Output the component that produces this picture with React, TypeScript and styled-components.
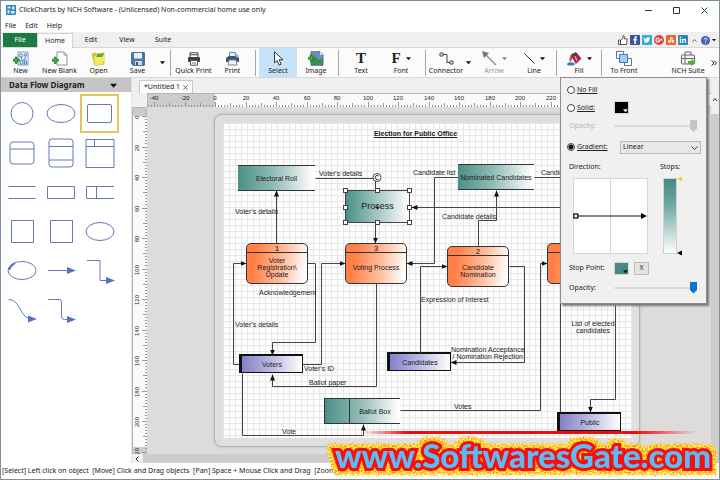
import React from "react";
import styled, { createGlobalStyle, css } from "styled-components";

const UI = '"Noto Sans", "Open Sans", sans-serif';
const ARIAL = '"Liberation Sans", Arial, sans-serif';

const Global = createGlobalStyle`
  *, *::before, *::after { box-sizing: border-box; }
  html, body { margin: 0; }
  body { font-family: ${UI}; font-size: 7px; line-height: 10px; color: #222; background: #fff; overflow: hidden; }
  button, input, select { font: inherit; color: inherit; margin: 0; }
  svg { display: block; flex: none; }
`;

/* ---------- window frame ---------- */

const Window = styled.div`
  position: relative;
  display: flex;
  flex-direction: column;
  height: 100vh;
  border: 1px solid #7a909c;
  background: #fff;
`;

const TitleBar = styled.header`
  display: flex;
  align-items: center;
  height: 18px;
  padding: 0 11px 0 5px;
  gap: 3px;
`;

const Title = styled.h1`
  flex: 1;
  margin: 0;
  font-size: 7px;
  font-weight: 400;
  white-space: nowrap;
`;

const WindowButtons = styled.div`
  display: flex;
  gap: 21px;
`;

const BareButton = styled.button`
  display: flex;
  align-items: center;
  justify-content: center;
  padding: 0;
  border: 0;
  background: none;
`;

const MenuBar = styled.nav`
  display: flex;
  height: 13px;
  padding-left: 4px;
  gap: 9px;
`;

const TabStrip = styled.div`
  display: flex;
  align-items: stretch;
  height: 16px;
  padding: 1px 3px 0 2px;
  background: #efefef;
  border-bottom: 1px solid #d8d8d8;
`;

const RibbonTab = styled.button<{ $kind?: "file" | "active" }>`
  width: 36px;
  padding: 0;
  border: 0;
  background: none;
  ${(p) => p.$kind === "file" && css`background: #1e7a45; color: #fff; width: 34px;`}
  ${(p) => p.$kind === "active" && css`background: #fbfbfb; border: 1px solid #d4d4d4; border-bottom: 0; margin-bottom: -1px;`}
`;

const Social = styled.div`
  display: flex;
  align-items: center;
  gap: 2px;
  margin-left: auto;
`;

/* ---------- toolbar ---------- */

const Toolbar = styled.div`
  display: flex;
  align-items: stretch;
  height: 30px;
  background: #fbfbfb;
  border-bottom: 1px solid #d9d9d9;
`;

const Tool = styled.button<{ $width?: number; $on?: boolean; $dim?: boolean }>`
  display: flex;
  flex-direction: column;
  align-items: center;
  flex: none;
  width: ${(p) => p.$width ?? 39}px;
  padding: 3px 0 0;
  border: 0;
  background: ${(p) => (p.$on ? "#c6e2f8" : "none")};
  color: ${(p) => (p.$dim ? "#999" : "#222")};
  white-space: nowrap;
  line-height: 10px;
`;

const ToolIcon = styled.span`
  display: flex;
  align-items: center;
  gap: 5px;
  height: 15px;
`;

const Separator = styled.span`
  flex: none;
  width: 1px;
  margin: 2px 3px 1px;
  background: #a6a6a6;
`;

const Split = styled(BareButton)`
  flex: none;
  width: 10px;
`;

const Anchor = styled.div`
  position: relative;
  display: flex;
`;

const Spacer = styled.span`
  flex: 1;
`;

/* ---------- main area ---------- */

const Main = styled.main`
  display: grid;
  grid-template-columns: 131px minmax(0, 1fr);
  flex: 1;
  min-height: 0;
`;

const Sidebar = styled.aside`
  border-right: 1px solid #e2e2e2;
  background: #fff;
`;

const SidebarTitle = styled.button`
  display: flex;
  align-items: center;
  justify-content: space-between;
  width: 100%;
  height: 14px;
  padding: 0 14px 0 8px;
  border: 0;
  background: #c5c5c5;
  font-size: 8px;
  font-weight: 700;
`;

const Palette = styled.div`
  display: grid;
  grid-template-columns: repeat(3, 39px);
  grid-auto-rows: 39px;
  padding: 2px 1px;
`;

const Shape = styled.button<{ $on?: boolean }>`
  padding: 0;
  border: 2px solid ${(p) => (p.$on ? "#e3c55c" : "transparent")};
  background: none;
`;

const Editor = styled.section`
  display: flex;
  flex-direction: column;
  min-width: 0;
  background: #efefef;
`;

const DocTabs = styled.div`
  display: flex;
  align-items: flex-end;
  height: 15px;
  padding-left: 7px;
`;

const DocTab = styled.div`
  display: flex;
  align-items: center;
  gap: 3px;
  height: 13px;
  padding: 0 4px;
  border: 1px solid #c8c8c8;
  border-bottom: 0;
  background: #fcfcfc;
`;

const Workspace = styled.div`
  display: grid;
  grid-template-columns: 15px minmax(0, 1fr) 8px;
  grid-template-rows: 14px minmax(0, 1fr) 9px;
  flex: 1;
  min-height: 0;
`;

const Corner = styled.span`
  background: #f0f0f0;
`;

const RulerBox = styled.div`
  overflow: hidden;
  background: #fafafa;
  border: solid #b4b4b4;
  border-width: 1px 0 0 1px;
`;

const Canvas = styled.div`
  overflow: hidden;
  padding: 7px 0 0 67px;
  background: #dcdcdc;
`;

const PageFrame = styled.div`
  width: 426px;
  padding: 8px 7px 8px 8px;
  border: 1px solid #b2b2b2;
  border-radius: 8px;
  background: #dfdfdf;
  box-shadow: 0 0 2px 1px #c9c9c9;
`;

const Page = styled.div`
  position: relative;
  height: 315px;
  background-color: #fefefe;
  background-image: linear-gradient(#e6e6e6 1px, transparent 1px),
    linear-gradient(90deg, #e6e6e6 1px, transparent 1px);
  background-size: 6px 6px;
  font-family: ${ARIAL};
  line-height: 7px;
  color: #1a1a1a;
`;

const VScroll = styled.div`
  grid-row: 1 / 3;
  grid-column: 3;
  display: flex;
  flex-direction: column;
  align-items: stretch;
  gap: 6px;
  padding-top: 4px;
  background: #f0f0f0;
`;

const HScroll = styled.div`
  grid-column: 1 / 4;
  display: flex;
  align-items: stretch;
  gap: 4px;
  padding-left: 3px;
  background: #f0f0f0;
`;

const Thumb = styled.span`
  flex: 1;
  background: #cdcdcd;
`;

const StatusBar = styled.footer`
  display: flex;
  align-items: center;
  gap: 10px;
  height: 16px;
  padding-left: 1px;
  background: #fff;
  white-space: pre;
`;

/* ---------- diagram nodes ---------- */

const PAGE_X = 223;
const PAGE_Y = 123;

type Box = { $x: number; $y: number; $w?: number; $h?: number };

const placed = css<Box>`
  position: absolute;
  left: ${(p) => p.$x - PAGE_X}px;
  top: ${(p) => p.$y - PAGE_Y}px;
  ${(p) => p.$w && `width: ${p.$w}px;`}
  ${(p) => p.$h && `height: ${p.$h}px;`}
`;

const Store = styled.div<Box & { $split?: boolean }>`
  ${placed}
  display: flex;
  align-items: center;
  justify-content: center;
  border: solid #333;
  border-width: 1px 0;
  background: linear-gradient(90deg, #4b9086, #8fbab4 45%, #fff 98%);
  ${(p) => p.$split && css`
    padding-left: 25px;
    border-left-width: 1px;
    &::before { content: ""; position: absolute; left: 24px; top: 0; bottom: 0; width: 1px; background: #333; }
  `}
`;

const ProcessBox = styled.div<Box>`
  ${placed}
  display: flex;
  align-items: center;
  justify-content: center;
  border: 1px solid #444;
  background: linear-gradient(90deg, #4b9086, #fff);
  font-size: 9px;
`;

const Step = styled.div<Box>`
  ${placed}
  border: 1px solid #333;
  border-radius: 5px;
  background: linear-gradient(100deg, #ff7f45 15%, #ffc0a2 60%, #fff 95%);
  text-align: center;
`;

const StepNumber = styled.div`
  height: 9px;
  border-bottom: 1px solid #333;
  font-size: 8px;
  line-height: 9px;
`;

const StepName = styled.div`
  display: flex;
  align-items: center;
  justify-content: center;
  height: 29px;
  white-space: pre-line;
`;

const Actor = styled.div<Box>`
  ${placed}
  display: flex;
  align-items: center;
  justify-content: center;
  border: solid #111;
  border-width: 2px 1px 1px 3px;
  background: linear-gradient(90deg, #8480c9, #c9c7e8 60%, #fff);
`;

const FlowLabel = styled.div<Box & { $align?: string }>`
  ${placed}
  text-align: ${(p) => p.$align ?? "left"};
  white-space: pre;
`;

const PageTitle = styled.h2`
  margin: 0;
  padding: 6px 24px 0 0;
  font-size: 7px;
  line-height: 9px;
  text-align: center;
  text-decoration: underline;
`;

const Links = styled.svg`
  position: absolute;
  inset: 0;
  overflow: visible;
`;

/* ---------- fill panel ---------- */

const Panel = styled.form`
  position: absolute;
  z-index: 5;
  top: 100%;
  left: 0;
  width: 147px;
  padding: 3px 5px 8px 6px;
  border: 1px solid #8d8d8d;
  background: #f0f0f0;
  box-shadow: 2px 2px 2px #777;
`;

const Field = styled.div<{ $height?: number }>`
  display: grid;
  grid-template-columns: 47px minmax(0, 1fr);
  align-items: center;
  height: ${(p) => p.$height ?? 18}px;
`;

const Choice = styled.label`
  display: flex;
  align-items: center;
  gap: 2px;
  text-decoration: underline;
`;

const Radio = styled.input`
  appearance: none;
  flex: none;
  width: 8px;
  height: 8px;
  border: 1px solid #444;
  border-radius: 50%;
  background: #fff;
  &:checked { background: radial-gradient(#111 2px, #fff 3px); }
`;

const Caption = styled.label<{ $dim?: boolean }>`
  padding-left: 2px;
  color: ${(p) => (p.$dim ? "#b5b5b5" : "#222")};
  white-space: nowrap;
`;

const Swatch = styled.button<{ $color: string }>`
  display: flex;
  align-items: flex-end;
  justify-content: flex-end;
  width: 15px;
  height: 13px;
  padding: 0;
  border: 1px solid #d5d5d5;
  background: ${(p) => p.$color};
`;

const Slider = styled.input<{ $color: string }>`
  appearance: none;
  width: 83px;
  height: 12px;
  background: linear-gradient(#dcdcdc, #dcdcdc) center / 100% 2px no-repeat;
  &::-webkit-slider-thumb {
    appearance: none;
    width: 7px;
    height: 12px;
    background: ${(p) => p.$color};
    clip-path: polygon(0 0, 100% 0, 100% 70%, 50% 100%, 0 70%);
  }
`;

const SelectWrap = styled.span`
  position: relative;
  display: flex;
  margin-left: 6px;
  svg { position: absolute; right: 3px; top: 5px; }
`;

const Select = styled.select`
  appearance: none;
  width: 100%;
  height: 13px;
  padding: 0 2px;
  border: 1px solid #b8b8b8;
  border-radius: 0;
  background: #e8e8e8;
  line-height: 10px;
`;

const GradientArea = styled.div`
  display: flex;
  gap: 15px;
  padding: 3px 0 0 6px;
`;

const StopControls = styled.div`
  display: flex;
  align-items: center;
  gap: 5px;
`;

const RemoveStop = styled(BareButton)`
  width: 15px;
  height: 13px;
  border: 1px solid #bbb;
  background: #e4e4e4;
`;

const StopHeads = styled(Field)`
  grid-template-columns: 91px minmax(0, 1fr);
`;

/* ---------- banner ---------- */

const Banner = styled.div`
  position: absolute;
  z-index: 6;
  right: 8px;
  bottom: 3px;
  font-family: Lato, ${ARIAL};
  font-size: 33px;
  font-weight: 900;
  line-height: 42px;
  color: #5bbdf5;
  -webkit-text-stroke: 6px #fb0d0d;
  paint-order: stroke fill;
  filter: url(#banner-glow);
  white-space: nowrap;
`;

const RedRule = styled.div`
  position: absolute;
  z-index: 6;
  left: 50%;
  right: 22px;
  bottom: 45px;
  height: 3px;
  background: linear-gradient(90deg, transparent, #f50a0a 14%, #f50a0a 82%, transparent);
`;

/* ---------- icons ---------- */

const Caret = ({ size = 5, color = "#111" }: { size?: number; color?: string }) => (
  <svg width={size} height={size} viewBox="0 0 6 6"><path d="M0 1.5h6L3 5z" fill={color} /></svg>
);

const Cross = ({ size }: { size: number }) => (
  <svg width={size} height={size} viewBox="0 0 7 7" stroke="#333" fill="none"><path d="M.5.5l6 6M6.5.5l-6 6" /></svg>
);

const Plus = ({ x = 0, y = 0 }: { x?: number; y?: number }) => (
  <path transform={`translate(${x} ${y})`} d="M2.2 0h2v2.2h2.3v2H4.200v2.300h-2V4.200H0v-2h2.200z" fill="#3bb02e" stroke="#137016" strokeWidth=".6" />
);

const icons: Record<string, React.ReactNode> = {
  New: (
    <svg width="16" height="15" viewBox="0 0 16 15">
      <path d="M5 1h10v13H5z" fill="#eaf3fc" stroke="#7e9fc4" />
      <circle cx="8" cy="4.500" r="1.600" fill="none" stroke="#3f7fb8" /><circle cx="12.500" cy="4" r="1.300" fill="none" stroke="#3f7fb8" />
      <path d="M8 6l1 3h3V6M7 10h3v3H7zM11.500 10h2v3h-2z" fill="none" stroke="#3f7fb8" strokeWidth=".9" /><Plus y={6} />
    </svg>
  ),
  "New Blank": (
    <svg width="16" height="15" viewBox="0 0 16 15"><path d="M5 1h7l3 3v10H5z" fill="#fff" stroke="#8c96a3" /><path d="M12 1v3h3" fill="none" stroke="#8c96a3" /><Plus y={6} /></svg>
  ),
  Open: (
    <svg width="15" height="15" viewBox="0 0 15 15"><path d="M1 3l4-1 1 1 7-1v11l-9 1.500z" fill="#d9c52c" stroke="#b5a21d" strokeWidth=".6" /><path d="M3 5l11-1-2 9-8 1.500z" fill="#f5e861" /><path d="M5 6l3-4 1 2 4-2-2 4z" fill="#48a836" /></svg>
  ),
  Save: (
    <svg width="14" height="14" viewBox="0 0 14 14"><path d="M.7.7h12.600v12.600H2L.7 12z" fill="#4f7aa8" stroke="#335c8c" /><path d="M3 1h8v5.500H3z" fill="#e9eff6" /><path d="M4 9h7v4H4z" fill="#d3dbe3" /><path d="M5 10h2v3H5z" fill="#456" /></svg>
  ),
  "Quick Print": (
    <svg width="14" height="14" viewBox="0 0 14 14"><path d="M3 5V.8h8V5M3 2.800h8" fill="#fff" stroke="#444" /><rect x="1" y="5" width="12" height="5" rx="1" fill="#3f3f3f" /><path d="M3.500 8.500h7v4.700h-7z" fill="#fff" stroke="#555" /><path d="M5 11h4" stroke="#777" /></svg>
  ),
  Print: (
    <svg width="15" height="15" viewBox="0 0 15 15"><path d="M4 6l1-5 6 1-1 4" fill="#e6f0fb" stroke="#5b83b3" /><path d="M1 7l3-2h8l2 2v4H1z" fill="#4a5058" /><path d="M4 9h7l1 5H3z" fill="#eef4fb" stroke="#6c87a8" /><circle cx="12" cy="5" r="1.500" fill="#77aee2" /></svg>
  ),
  Select: (
    <svg width="11" height="15" viewBox="0 0 11 15"><path d="M1.500.8v11l2.600-2.300 2 4.600 2-.9-2-4.400H10z" fill="#fff" stroke="#222" strokeWidth=".9" /></svg>
  ),
  Image: (
    <svg width="16" height="15" viewBox="0 0 16 15"><path d="M3 .700h9l3 3v10.600H3z" fill="#6a8fc0" stroke="#5a6f92" /><path d="M3.500 9l4-3 3 3 4-2v7h-11z" fill="#3f8d4d" /><path d="M12 .700v3h3" fill="#e8eef6" /><Plus y={4} /></svg>
  ),
  Connector: (
    <svg width="15" height="13" viewBox="0 0 15 13" fill="none" stroke="#444"><path d="M1 1h3v3H1zM11 9h3v3h-3zM4 2.500h4v8h3" /></svg>
  ),
  Arrow: (
    <svg width="15" height="15" viewBox="0 0 15 15"><path d="M3 3l11 11" stroke="#888" strokeWidth="1.200" /><path d="M0 0l7 2-5 5z" fill="#777" /></svg>
  ),
  Line: <svg width="11" height="11" viewBox="0 0 11 11"><path d="M.5.5l10 10" stroke="#333" /></svg>,
  Fill: (
    <svg width="15" height="14" viewBox="0 0 15 14"><path d="M4 3l5-2.500 5 6-5 5z" fill="#b51d42" stroke="#5d1630" strokeWidth=".6" /><path d="M4 3l5-2.500 1.500 2L5.500 6z" fill="#444" /><path d="M8 4l2 5" stroke="#f090a8" strokeWidth="1.500" /><path d="M4 3c-2 3-2 5-1 7l3-4z" fill="#e04060" /><path d="M0 12c1-2 4-2 7-1 2 1 0 2.500-3 2.500S0 13 0 12z" fill="#3979c2" /></svg>
  ),
  "To Front": (
    <svg width="16" height="15" viewBox="0 0 16 15" stroke="#54759c"><path d="M.5.5h7v7h-7zM8.500 7.500h7v7h-7z" fill="#fff" /><path d="M3.500 3.500h8v8h-8z" fill="#a9cdf7" stroke="#4476bd" /></svg>
  ),
  "NCH Suite": (
    <svg width="16" height="15" viewBox="0 0 16 15"><path d="M5 4V1h6v3" fill="none" stroke="#667" /><rect x="1.500" y="4" width="13" height="9" rx="1" fill="#f5f7f5" stroke="#667" /><path d="M1.500 7.500h13M5 4v9" stroke="#667" /><path d="M8 10h3V8l4.500 3.500L11 15v-2H8z" fill="#4dae33" /></svg>
  ),
};

const Glyph = styled.span`
  font-family: "Liberation Serif", serif;
  font-size: 15px;
  font-weight: 700;
  line-height: 15px;
`;

type ToolProps = { name: string; width?: number; caret?: boolean; on?: boolean; dim?: boolean; glyph?: string };

const ToolButton = ({ name, width, caret, on, dim, glyph }: ToolProps) => (
  <Tool type="button" $width={width} $on={on} $dim={dim} aria-pressed={on}>
    <ToolIcon>
      {glyph ? <Glyph aria-hidden>{glyph}</Glyph> : icons[name]}
      {caret && <Caret color={dim ? "#888" : "#111"} />}
    </ToolIcon>
    {name}
  </Tool>
);

const AppIcon = () => (
  <svg width="10" height="10" viewBox="0 0 10 10"><rect width="10" height="10" rx="1" fill="#2f87b5" /><path d="M1.500 1.500h3v2h-3zM6 1.500h2.500v3H6zM1.500 5h2v3.500h-2zM5 6h3.500v2.500H5z" fill="#d9f0fb" /></svg>
);

const badges = [
  { name: "Facebook", color: "#3a5795", d: "M5.800 9V5.500H7V4H5.800V3.200c0-.5.300-.7 1.200-.6V1.200C5 1 4.300 1.700 4.300 3v1h-1v1.500h1V9z" },
  { name: "Twitter", color: "#35a8e0", d: "M1.500 7.200c2.500 1.500 6 .3 6-3.700l.9-1-1.200.2C6.500 1.500 4.500 2 4.800 3.700 3.400 3.700 2.500 3 1.900 2.200c-.6 1 0 2 .5 2.400l-.7-.2c0 1 .7 1.500 1.400 1.700l-.6.100c.3.600.8.800 1.300.8-.7.300-1.500.400-2.300.2z" },
  { name: "Google Plus", color: "#d84a3c", round: true, d: "M4 4.400h2.400C6.700 6.500 5.500 7.500 4 7.500a2.500 2.500 0 110-5c.7 0 1.200.2 1.700.6l-.8.8C3.800 3 2.500 3.800 2.500 5c0 1.600 2.200 1.900 2.700.5H4zM7 3.500h.7v.8h.8V5h-.8v.8H7V5h-.6v-.7H7z" },
  { name: "StumbleUpon", color: "#eb6a24", d: "M2 5h1.500v1.500h.7V3.800c0-2 2.600-2 2.600 0v.6H5.600v-.8h-.5v3c0 1.800-3 1.800-3 0zM5.700 5H8v1.500c0 1.800-2.400 1.800-2.400 0z" },
  { name: "LinkedIn", color: "#2f83b7", d: "M1.800 3.800h1.300V8H1.800zM1.800 1.800h1.300v1.300H1.800zM4 3.800h1.200v.6c.8-1.200 3-1 3 1V8H6.900V5.700c0-1-1.500-1-1.500 0V8H4z" },
];

const BadgeIcon = ({ badge }: { badge: (typeof badges)[number] }) => (
  <svg width="10" height="10" viewBox="0 0 10 10"><rect width="10" height="10" rx={badge.round ? 5 : 1} fill={badge.color} /><path d={badge.d} fill="#fff" /></svg>
);

/* ---------- shape palette ---------- */

const rightHead = (x: number, y: number) => <path d={`M${x} ${y - 3.5}l9 3.500-9 3.500z`} fill="#5672c4" stroke="none" />;

const shapes: { name: string; draw: React.ReactNode }[] = [
  { name: "Circle", draw: <circle cx="18" cy="17.500" r="11" /> },
  { name: "Ellipse", draw: <ellipse cx="18" cy="17.500" rx="14" ry="9" /> },
  { name: "Rounded rectangle", draw: <rect x="5.500" y="8.500" width="24" height="18" rx="1.500" /> },
  { name: "Process with header", draw: <><rect x="6" y="7" width="24" height="22" rx="3" /><path d="M6 14h24" /></> },
  { name: "Process with bands", draw: <><rect x="6" y="4" width="24" height="28" rx="3" /><path d="M6 11.500h24M6 25h24" /></> },
  { name: "Process with index", draw: <path d="M4 4.500h28v28H4zM4 11.500h28M12.500 4.500v7" /> },
  { name: "Open store", draw: <path d="M4.500 12.500h27M4.500 24.500h27" /> },
  { name: "Store", draw: <path d="M4.500 12.500h27v12h-27z" /> },
  { name: "Indexed store", draw: <path d="M32 12.500H4.500v12H32M14.500 12.500v12" /> },
  { name: "External entity", draw: <path d="M7.500 7.500h22v22h-22z" /> },
  { name: "Entity with shadow", draw: <path d="M7.500 7.500h22v22h-22z" /> },
  { name: "Terminator", draw: <ellipse cx="18" cy="18.500" rx="14" ry="9" /> },
  { name: "Marked ellipse", draw: <><ellipse cx="18" cy="18.500" rx="14" ry="9" /><path d="M5 18c1-3 3-5 6-7" strokeWidth="2" /></> },
  { name: "Straight arrow", draw: <><path d="M5 18.500h20" />{rightHead(24, 18.5)}</> },
  { name: "Elbow arrow", draw: <><path d="M5 8.500h13v20h8" />{rightHead(24, 28.5)}</> },
  { name: "Curved arrow", draw: <><path d="M4.500 8.500c12 0 11 17 21 19" />{rightHead(24, 28)}</> },
  { name: "Rounded elbow arrow", draw: <><path d="M5 8.500h11q2.500 0 2.500 3v14q0 3 3 3h4" />{rightHead(24, 28.5)}</> },
];

/* ---------- rulers ---------- */

const TWENTY = 61 / 2;

const Ruler = ({ vertical, origin, from, count }: { vertical?: boolean; origin: number; from: number; count: number }) => {
  const ticks: string[] = [];
  const labels: React.ReactNode[] = [];
  for (let i = -30; i <= 190; i++) {
    const p = Math.round(origin + (i * TWENTY) / 10);
    const len = i % 10 === 0 ? 6 : i % 5 === 0 ? 5 : 3;
    ticks.push(vertical ? `M15 ${p + 0.5}h-${len}` : `M${p + 0.5} 14v-${len}`);
  }
  for (let n = 0; n < count; n++) {
    const value = from + n * 20;
    const p = Math.round(origin + (value / 20) * TWENTY);
    labels.push(
      vertical
        ? <text key={value} transform={`translate(6 ${p + 1}) rotate(-90)`} textAnchor="middle">{value}</text>
        : <text key={value} x={p} y="6" textAnchor="middle">{value}</text>
    );
  }
  return (
    <svg width={vertical ? 15 : "100%"} height={vertical ? "100%" : 14} fontFamily={ARIAL} fontSize="6" fill="#222" aria-hidden>
      {vertical ? <rect width="15" height={origin} fill="#cccccc" /> : <rect width={origin} height="14" fill="#cccccc" />}
      {vertical && <rect width="15" y={origin + 331} height="30" fill="#cccccc" />}
      <path d={ticks.join("")} stroke="#999" fill="none" />
      {labels}
    </svg>
  );
};

/* ---------- diagram data ---------- */

type Link = { d: string; plain?: boolean };

const links: Link[] = [
  { d: "M315 178H375V190", plain: true },
  { d: "M375 223V243" },
  { d: "M276 243V190" },
  { d: "M239 364H233V263H246" },
  { d: "M307 263H315V342H272V355" },
  { d: "M302 364H321V263H345" },
  { d: "M376 283V386H272V374" },
  { d: "M242 373V435H363V424" },
  { d: "M458 177H434V263H406" },
  { d: "M534 177H590", plain: true },
  { d: "M590 207H411" },
  { d: "M478 246V220H496V190" },
  { d: "M420 353V266H447" },
  { d: "M509 266H524V362H450" },
  { d: "M400 410H540V263H547" },
  { d: "M560 283V412", plain: true },
  { d: "M615 283V399H590V412" },
];

const labels = [
  { x: 319, y: 170, text: "Voter's details" }, { x: 235, y: 208, text: "Voter's details" },
  { x: 259, y: 289, text: "Acknowledgement" }, { x: 235, y: 321, text: "Voter's details" },
  { x: 304, y: 365, text: "Voter's ID" }, { x: 309, y: 379, text: "Ballot paper" },
  { x: 282, y: 428, text: "Vote" }, { x: 413, y: 169, text: "Candidate list" },
  { x: 442, y: 213, text: "Candidate details" }, { x: 541, y: 169, text: "Candidate list" },
  { x: 421, y: 296, text: "Expression of Interest" },
  { x: 451, y: 346, w: 72, align: "right", text: "Nomination Acceptance\n/ Nomination Rejection" },
  { x: 454, y: 403, text: "Votes" },
  { x: 568, y: 320, w: 50, align: "center", text: "List of elected\ncandidates" },
];

const steps = [
  { x: 246, y: 243, no: "1", name: "Voter\nRegistration\\\nUpdate" },
  { x: 345, y: 243, no: "3", name: "Voting Process" },
  { x: 447, y: 246, no: "2", name: "Candidate\nNomination" },
  { x: 547, y: 243, no: "", name: "" },
];

const handles = [[345, 190], [377, 190], [409, 190], [345, 207], [409, 207], [345, 222], [377, 222], [409, 222]];

const Diagram = () => (
  <Page>
    <PageTitle>Election for Public Office</PageTitle>
    <Store $x={238} $y={165} $w={77} $h={26}>Electoral Roll</Store>
    <Store $x={458} $y={164} $w={76} $h={26}>Nominated Candidates</Store>
    <Store $x={324} $y={398} $w={76} $h={26} $split>Ballot Box</Store>
    {steps.map((s) => (
      <Step key={s.x} $x={s.x} $y={s.y} $w={62} $h={41}>
        <StepNumber>{s.no}</StepNumber>
        <StepName>{s.name}</StepName>
      </Step>
    ))}
    <Actor $x={239} $y={354} $w={64} $h={19}>Voters</Actor>
    <Actor $x={387} $y={352} $w={64} $h={19}>Candidates</Actor>
    <Actor $x={557} $y={412} $w={64} $h={19}>Public</Actor>
    <ProcessBox $x={345} $y={190} $w={65} $h={33}>Process</ProcessBox>
    <Links width="100%" height="100%" aria-hidden>
      <defs>
        <marker id="head" markerUnits="userSpaceOnUse" markerWidth="7" markerHeight="6" refX="6" refY="3" orient="auto">
          <path d="M0 0.500L6 3 0 5.500z" fill="#111" />
        </marker>
      </defs>
      <g transform={`translate(${0.5 - PAGE_X} ${0.5 - PAGE_Y})`} fill="none" stroke="#444">
        {links.map((l) => <path key={l.d} d={l.d} markerEnd={l.plain ? undefined : "url(#head)"} />)}
        {handles.map(([x, y]) => <rect key={`${x}-${y}`} x={x - 2} y={y - 2} width="4" height="4" fill="#fff" />)}
        <circle cx="376.500" cy="177" r="4" fill="#fff" />
        <path d="M378 175.500a2 2 0 100 3M375 207h4M377 205v4" stroke="#222" />
      </g>
    </Links>
    {labels.map((l) => (
      <FlowLabel key={`${l.x}-${l.y}`} $x={l.x} $y={l.y} $w={l.w} $align={l.align}>{l.text}</FlowLabel>
    ))}
  </Page>
);

const FillPanel = () => (
  <Panel>
    <Field><Choice><Radio type="radio" name="fill" />No Fill</Choice></Field>
    <Field $height={17}>
      <Choice><Radio type="radio" name="fill" />Solid:</Choice>
      <Swatch type="button" $color="#000" aria-label="Solid colour"><Caret color="#fff" /></Swatch>
    </Field>
    <Field $height={20}>
      <Caption htmlFor="solid-opacity" $dim>Opacity:</Caption>
      <Slider id="solid-opacity" type="range" defaultValue={100} disabled $color="#c4c4c4" />
    </Field>
    <Field $height={22}>
      <Choice><Radio type="radio" name="fill" defaultChecked />Gradient:</Choice>
      <SelectWrap>
        <Select aria-label="Gradient type"><option>Linear</option></Select>
        <svg width="7" height="4" viewBox="0 0 7 4" fill="none" stroke="#444"><path d="M.5.5l3 3 3-3" /></svg>
      </SelectWrap>
    </Field>
    <StopHeads $height={17}><Caption as="span">Direction:</Caption><Caption as="span">Stops:</Caption></StopHeads>
    <GradientArea>
      <svg width="75" height="76" viewBox="0 0 75 76">
        <path d="M.5.5h74v75H.5zM37.500.5v75" fill="#fff" stroke="#d6d6d6" />
        <path d="M2 38h66" stroke="#111" /><path d="M68 35l6 3-6 3z" fill="#000" />
        <rect x=".8" y="36" width="4" height="4" fill="#fff" stroke="#000" strokeWidth="1.200" />
      </svg>
      <svg width="22" height="78" viewBox="0 0 22 78" overflow="visible">
        <defs><linearGradient id="stops" x2="0" y2="1"><stop stopColor="#438a84" /><stop offset=".35" stopColor="#6fa8a2" /><stop offset="1" stopColor="#fff" /></linearGradient></defs>
        <rect x=".5" y=".5" width="13" height="75" fill="url(#stops)" stroke="#d0d0d0" />
        <path d="M14 1l5-2v4z" fill="#f0c830" /><path d="M14 75l5-2.500v5z" fill="#000" />
      </svg>
    </GradientArea>
    <Field $height={24}>
      <Caption as="span">Stop Point:</Caption>
      <StopControls>
        <Swatch type="button" $color="#438a84" aria-label="Stop colour"><Caret /></Swatch>
        <RemoveStop type="button">X</RemoveStop>
      </StopControls>
    </Field>
    <Field $height={15}>
      <Caption htmlFor="stop-opacity">Opacity:</Caption>
      <Slider id="stop-opacity" type="range" defaultValue={100} $color="#0a74cf" />
    </Field>
  </Panel>
);

export default function App() {
  return (
    <>
      <Global />
      <Window>
        <TitleBar>
          <AppIcon />
          <Title>ClickCharts by NCH Software - (Unlicensed) Non-commercial home use only</Title>
          <WindowButtons>
            <BareButton aria-label="Minimize"><svg width="7" height="7" viewBox="0 0 7 7"><path d="M0 3.500h7" stroke="#333" /></svg></BareButton>
            <BareButton aria-label="Maximize"><svg width="7" height="7" viewBox="0 0 7 7"><path d="M.5.5h6v6h-6z" fill="none" stroke="#333" /></svg></BareButton>
            <BareButton aria-label="Close"><Cross size={7} /></BareButton>
          </WindowButtons>
        </TitleBar>
        <MenuBar>
          <BareButton>File</BareButton><BareButton>Edit</BareButton><BareButton>Help</BareButton>
        </MenuBar>
        <TabStrip>
          <RibbonTab $kind="file">File</RibbonTab>
          <RibbonTab $kind="active">Home</RibbonTab>
          <RibbonTab>Edit</RibbonTab>
          <RibbonTab>View</RibbonTab>
          <RibbonTab>Suite</RibbonTab>
          <Social>
            <BareButton aria-label="Like">
              <svg width="10" height="10" viewBox="0 0 10 10" fill="#fff" stroke="#333" strokeWidth=".8"><path d="M.5 5h2v4.500h-2zM2.500 5.500L5 3V.6c1.500 0 1.800 1.500 1.200 3.200h3L8.600 9.500H2.500z" /></svg>
            </BareButton>
            {badges.map((b) => <BareButton key={b.name} aria-label={b.name}><BadgeIcon badge={b} /></BareButton>)}
            <BareButton aria-label="Collapse ribbon"><svg width="9" height="5" viewBox="0 0 9 5" fill="none" stroke="#666"><path d="M2.500 3.500l2-2 2 2" /></svg></BareButton>
            <BareButton aria-label="Help">
              <svg width="9" height="9" viewBox="0 0 9 9"><circle cx="4.500" cy="4.500" r="4.500" fill="#4a5fb0" /><path d="M3.200 3.500c0-1.800 2.800-1.600 2.700 0C5.900 4.500 4.500 4.300 4.500 5.500M4.500 6.500v1" stroke="#fff" fill="none" /></svg>
            </BareButton>
            <BareButton aria-label="Help options"><Caret size={4} /></BareButton>
          </Social>
        </TabStrip>
        <Toolbar>
          <ToolButton name="New" />
          <ToolButton name="New Blank" />
          <ToolButton name="Open" />
          <ToolButton name="Save" />
          <Split aria-label="Save options"><Caret /></Split>
          <Separator />
          <ToolButton name="Quick Print" />
          <ToolButton name="Print" />
          <Separator />
          <ToolButton name="Select" width={38} on />
          <ToolButton name="Image" width={38} />
          <Separator />
          <ToolButton name="Text" width={38} glyph="T" />
          <ToolButton name="Font" width={42} glyph="F" caret />
          <Separator />
          <ToolButton name="Connector" width={34} />
          <Split aria-label="Connector options"><Caret /></Split>
          <ToolButton name="Arrow" width={42} caret dim />
          <ToolButton name="Line" width={38} caret />
          <Separator />
          <Anchor>
            <ToolButton name="Fill" width={38} caret />
            <FillPanel />
          </Anchor>
          <Separator />
          <ToolButton name="To Front" width={38} />
          <Spacer />
          <ToolButton name="NCH Suite" width={42} />
          <Split aria-label="More tools">
            <svg width="6" height="6" viewBox="0 0 6 6" fill="none" stroke="#222"><path d="M.5.5L3 3 .5 5.500M3 .5L5.500 3 3 5.500" /></svg>
          </Split>
        </Toolbar>
        <Main>
          <Sidebar>
            <SidebarTitle>Data Flow Diagram<Caret size={7} /></SidebarTitle>
            <Palette>
              {shapes.map((s) => (
                <Shape key={s.name} $on={s.name === "Rounded rectangle"} aria-label={s.name}>
                  <svg width="35" height="35" viewBox="0 0 35 35" fill="none" stroke="#6478b8">{s.draw}</svg>
                </Shape>
              ))}
            </Palette>
          </Sidebar>
          <Editor>
            <DocTabs><DocTab>*Untitled 1<BareButton aria-label="Close document"><Cross size={5} /></BareButton></DocTab></DocTabs>
            <Workspace>
              <Corner />
              <RulerBox><Ruler origin={67} from={-40} count={18} /></RulerBox>
              <VScroll>
                <BareButton aria-label="Scroll up"><svg width="6" height="5" viewBox="0 0 6 5" fill="none" stroke="#333"><path d="M1 4l2-2.500L5 4" /></svg></BareButton>
                <span />
                <Thumb />
              </VScroll>
              <RulerBox><Ruler vertical origin={8} from={0} count={12} /></RulerBox>
              <Canvas><PageFrame><Diagram /></PageFrame></Canvas>
              <HScroll>
                <BareButton aria-label="Scroll left"><svg width="4" height="6" viewBox="0 0 4 6" fill="none" stroke="#333"><path d="M3.500.5L1 3l2.500 2.500" /></svg></BareButton>
                <Thumb />
              </HScroll>
            </Workspace>
          </Editor>
        </Main>
        <StatusBar>
          <span>{"[Select] Left click on object  [Move] Click and Drag objects  [Pan] Space + Mouse Click and Drag  [Zoom] Ctrl + Mouse Wheel"}</span>
        </StatusBar>
        <RedRule />
        <Banner>www.SoftwaresGate.com</Banner>
        <svg width="0" height="0" aria-hidden style={{ position: "absolute" }}>
          <filter id="banner-glow" x="-5%" y="-40%" width="110%" height="180%" colorInterpolationFilters="sRGB">
            <feMorphology in="SourceAlpha" operator="dilate" radius="4" result="wide" />
            <feGaussianBlur in="wide" stdDeviation="1" result="soft" />
            <feTurbulence type="fractalNoise" baseFrequency="0.6" numOctaves="2" result="noise" />
            <feDisplacementMap in="soft" in2="noise" scale="5" result="rough" />
            <feColorMatrix in="noise" type="matrix" values="0 0 0 0 1  0 1.200 0 0 0.200  0 0.600 0 0 -0.100  0 0 0 0 1" result="grain" />
            <feComposite in="grain" in2="rough" operator="in" result="glow" />
            <feMerge><feMergeNode in="glow" /><feMergeNode in="SourceGraphic" /></feMerge>
          </filter>
        </svg>
      </Window>
    </>
  );
}
